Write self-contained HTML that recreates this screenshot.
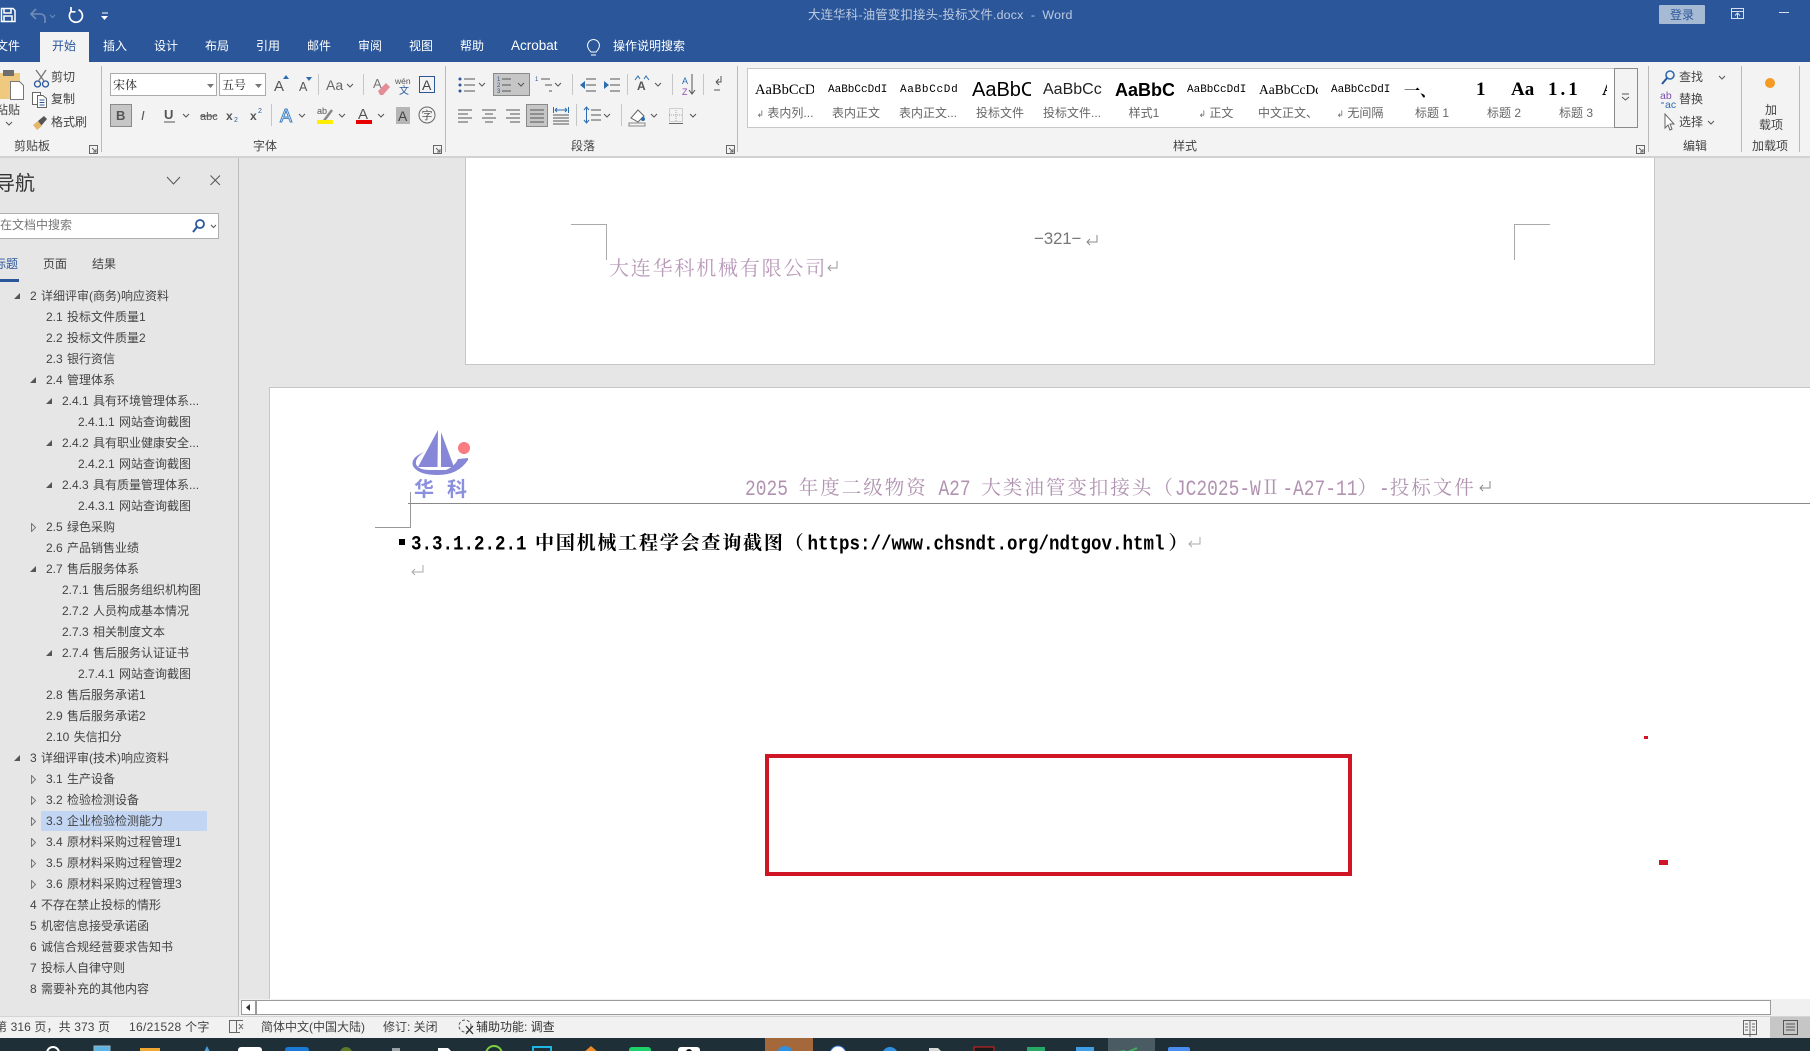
<!DOCTYPE html>
<html lang="zh-CN">
<head>
<meta charset="utf-8">
<title>大连华科-油管变扣接头-投标文件.docx - Word</title>
<style>
*{margin:0;padding:0;box-sizing:border-box}
html,body{width:1810px;height:1051px;overflow:hidden;background:#e6e6e6}
body{position:relative;font-family:"Liberation Sans","Noto Sans CJK SC",sans-serif;font-size:12px;color:#444}
.b{position:absolute}
.t{position:absolute;white-space:nowrap;line-height:16px;font-size:12px}
.w{color:#fff}
.g{color:#444;font-size:12px}
.lab{color:#444;font-size:12px}
.s{position:absolute;top:79px;width:59px;height:22px;overflow:hidden;white-space:nowrap;color:#000;line-height:22px}
.l{position:absolute;top:105px;width:72px;text-align:center;color:#666;font-size:12px;line-height:16px;white-space:nowrap}
#nav{position:absolute;left:0;top:286px;width:238px}
.r{position:relative;height:21px;line-height:21px;font-size:12px;color:#444;white-space:nowrap;word-spacing:1px}
.r svg{position:absolute;top:6px;width:8px;height:9px}
.l1{padding-left:30px}.l2{padding-left:46px}.l3{padding-left:62px}.l4{padding-left:78px}
.l1 svg{left:13px}.l2 svg{left:29px}.l3 svg{left:45px}
.z{font-family:"Liberation Serif","Noto Serif CJK SC",serif}
.m{font-family:"Liberation Mono",monospace}
#head{position:absolute;left:745px;top:473px;line-height:26px;white-space:nowrap;color:#b193b1;font-family:"Noto Serif CJK SC",serif;font-size:19.5px;letter-spacing:2px}
#head .m{display:inline-block;white-space:pre;transform:scaleY(1.22);font-size:17.9px;letter-spacing:0;font-family:"Liberation Mono",monospace}
#h1{position:absolute;left:411px;top:529px;line-height:26px;white-space:nowrap;color:#000;font-family:"Noto Serif CJK SC",serif;font-size:19px;letter-spacing:1.8px;font-weight:700}
#h1 .m{display:inline-block;white-space:pre;transform:scaleY(1.18);font-size:17.5px;letter-spacing:0;font-family:"Liberation Mono",monospace;font-weight:700}
svg text{font-family:"Liberation Sans","Noto Sans CJK SC",sans-serif}
</style>
</head>
<body>
<!-- title bar and ribbon backgrounds -->
<div class="b" style="left:0;top:0;width:1810px;height:62px;background:#2b579a"></div>
<div class="b" style="left:40px;top:32px;width:49px;height:30px;background:#f3f3f3"></div>
<div class="b" style="left:0;top:62px;width:1810px;height:94px;background:#f3f3f3"></div>
<div class="b" style="left:0;top:156px;width:1810px;height:2px;background:#d2d2d2"></div>

<!-- pages -->
<div class="b" style="left:465px;top:158px;width:1190px;height:207px;background:#fff;border:1px solid #c6c6c6;border-top:0"></div>
<div class="b" style="left:269px;top:387px;width:1541px;height:613px;background:#fff;border-left:1px solid #c6c6c6;border-top:1px solid #c6c6c6"></div>
<div class="b" style="left:238px;top:158px;width:1px;height:858px;background:#bcbcbc"></div>

<!-- scroll / status / taskbar -->
<div class="b" style="left:239px;top:999px;width:1571px;height:17px;background:#f0f0f0"></div>
<div class="b" style="left:256px;top:1000px;width:1515px;height:15px;background:#fff;border:1px solid #9a9a9a"></div>
<div class="b" style="left:241px;top:1000px;width:15px;height:15px;background:#fff;border:1px solid #9a9a9a"></div>
<div class="b" style="left:0;top:1016px;width:1810px;height:22px;background:#f1f1f1;border-top:1px solid #d4d4d4"></div>
<div class="b" style="left:1770px;top:1017px;width:40px;height:21px;background:#c6c6c6"></div>
<div class="b" style="left:0;top:1038px;width:1810px;height:13px;background:#1f2f38"></div>
<div class="b" style="left:765px;top:1038px;width:48px;height:13px;background:#a5683a"></div>
<div class="b" style="left:1108px;top:1038px;width:47px;height:13px;background:#4b5b63"></div>

<!-- title bar text -->
<div class="t" style="left:808px;top:7px;color:#bccae0;font-size:12.4px;letter-spacing:.2px">大连华科-油管变扣接头-投标文件.docx&nbsp; -&nbsp; Word</div>
<div class="b" style="left:1659px;top:5px;width:46px;height:19px;background:#a7bad3;border-radius:1px"></div>
<div class="t" style="left:1670px;top:7px;color:#2b579a">登录</div>

<!-- tabs -->
<div class="t w" style="left:-4px;top:38px">文件</div>
<div class="t" style="left:52px;top:38px;color:#2b579a">开始</div>
<div class="t w" style="left:103px;top:38px">插入</div>
<div class="t w" style="left:154px;top:38px">设计</div>
<div class="t w" style="left:205px;top:38px">布局</div>
<div class="t w" style="left:256px;top:38px">引用</div>
<div class="t w" style="left:307px;top:38px">邮件</div>
<div class="t w" style="left:358px;top:38px">审阅</div>
<div class="t w" style="left:409px;top:38px">视图</div>
<div class="t w" style="left:460px;top:38px">帮助</div>
<div class="t w" style="left:511px;top:38px;font-size:13.5px">Acrobat</div>
<div class="t w" style="left:613px;top:38px">操作说明搜索</div>

<!-- clipboard -->
<div class="t lab" style="left:-4px;top:102px">粘贴</div>
<div class="t lab" style="left:51px;top:69px">剪切</div>
<div class="t lab" style="left:51px;top:91px">复制</div>
<div class="t lab" style="left:51px;top:114px">格式刷</div>
<div class="t lab" style="left:14px;top:138px">剪贴板</div>

<!-- font -->
<div class="b" style="left:110px;top:73px;width:107px;height:23px;background:#fff;border:1px solid #ababab"></div>
<div class="b" style="left:219px;top:73px;width:47px;height:23px;background:#fff;border:1px solid #ababab"></div>
<div class="t" style="left:113px;top:77px;color:#222;font-family:'Noto Serif CJK SC',serif">宋体</div>
<div class="t" style="left:222px;top:77px;color:#222;font-family:'Noto Serif CJK SC',serif">五号</div>
<div class="b" style="left:110px;top:104px;width:22px;height:23px;background:#c6c6c6;border:1px solid #8a8a8a"></div>
<div class="b" style="left:493px;top:73px;width:37px;height:23px;background:#c6c6c6;border:1px solid #8a8a8a"></div>
<div class="b" style="left:526px;top:104px;width:22px;height:23px;background:#c6c6c6;border:1px solid #8a8a8a"></div>
<div class="t lab" style="left:253px;top:138px">字体</div>
<div class="t lab" style="left:571px;top:138px">段落</div>

<!-- styles gallery -->
<div class="b" style="left:747px;top:68px;width:868px;height:60px;background:#fff;border:1px solid #c8c8c8"></div>
<div class="b" style="left:1614px;top:68px;width:24px;height:60px;background:#f3f3f3;border:1px solid #8a8a8a"></div>
<div class="s z" style="left:755px;font-size:14.5px">AaBbCcD</div>
<div class="s m" style="left:828px;font-size:11px">AaBbCcDdI</div>
<div class="s m" style="left:900px;font-size:11px;letter-spacing:.7px">AaBbCcDd</div>
<div class="s" style="left:972px;font-size:20px">AaBbC</div>
<div class="s" style="left:1043px;font-size:16px;color:#222">AaBbCc</div>
<div class="s" style="left:1115px;font-size:18px;font-weight:700">AaBbCcc</div>
<div class="s m" style="left:1187px;font-size:11px">AaBbCcDdI</div>
<div class="s z" style="left:1259px;font-size:13.5px">AaBbCcDd</div>
<div class="s m" style="left:1331px;font-size:11px">AaBbCcDdI</div>
<div class="s" style="left:1404px;width:40px;font-size:16px;font-family:'Noto Serif CJK SC',serif;font-weight:700">一、</div>
<div class="s z" style="left:1476px;width:14px;font-size:19px;font-weight:700">1</div>
<div class="s z" style="left:1511px;width:28px;font-size:19px;font-weight:700">Aa</div>
<div class="s z" style="left:1548px;width:36px;font-size:19px;font-weight:700;letter-spacing:3px">1.1</div>
<div class="s z" style="left:1602px;width:5px;font-size:19px;font-weight:700">A</div>
<div class="l" style="left:749px"><span style="font-size:9px;font-family:'DejaVu Sans'">↲</span> 表内列...</div>
<div class="l" style="left:820px">表内正文</div>
<div class="l" style="left:892px">表内正文...</div>
<div class="l" style="left:964px">投标文件</div>
<div class="l" style="left:1036px">投标文件...</div>
<div class="l" style="left:1108px">样式1</div>
<div class="l" style="left:1180px"><span style="font-size:9px;font-family:'DejaVu Sans'">↲</span> 正文</div>
<div class="l" style="left:1252px">中文正文、</div>
<div class="l" style="left:1324px"><span style="font-size:9px;font-family:'DejaVu Sans'">↲</span> 无间隔</div>
<div class="l" style="left:1396px">标题 1</div>
<div class="l" style="left:1468px">标题 2</div>
<div class="l" style="left:1540px">标题 3</div>
<div class="t lab" style="left:1173px;top:138px">样式</div>

<!-- editing -->
<div class="t lab" style="left:1679px;top:69px">查找</div>
<div class="t lab" style="left:1679px;top:91px">替换</div>
<div class="t lab" style="left:1679px;top:114px">选择</div>
<div class="t lab" style="left:1683px;top:138px">编辑</div>
<div class="t lab" style="left:1765px;top:102px">加</div>
<div class="t lab" style="left:1759px;top:117px">载项</div>
<div class="t lab" style="left:1752px;top:138px">加载项</div>

<!-- nav header -->
<div class="t" style="left:-5px;top:172px;font-size:20px;line-height:24px;color:#333">导航</div>
<div class="b" style="left:-2px;top:213px;width:221px;height:26px;background:#fff;border:1px solid #b0b0b0"></div>
<div class="t" style="left:0;top:217px;color:#777">在文档中搜索</div>
<div class="t" style="left:-6px;top:256px;color:#2b579a">标题</div>
<div class="b" style="left:0;top:279px;width:19px;height:3px;background:#2b579a"></div>
<div class="t" style="left:43px;top:256px;color:#444">页面</div>
<div class="t" style="left:92px;top:256px;color:#444">结果</div>

<!-- selection -->
<div class="b" style="left:41px;top:811px;width:166px;height:20px;background:#c2d5f2"></div>

<!-- nav tree -->
<div id="nav">
<div class="r l1"><svg viewBox="0 0 8 9"><polygon points="1,7 7,7 7,1" fill="#555"/></svg>2 详细评审(商务)响应资料</div>
<div class="r l2">2.1 投标文件质量1</div>
<div class="r l2">2.2 投标文件质量2</div>
<div class="r l2">2.3 银行资信</div>
<div class="r l2"><svg viewBox="0 0 8 9"><polygon points="1,7 7,7 7,1" fill="#555"/></svg>2.4 管理体系</div>
<div class="r l3"><svg viewBox="0 0 8 9"><polygon points="1,7 7,7 7,1" fill="#555"/></svg>2.4.1 具有环境管理体系...</div>
<div class="r l4">2.4.1.1 网站查询截图</div>
<div class="r l3"><svg viewBox="0 0 8 9"><polygon points="1,7 7,7 7,1" fill="#555"/></svg>2.4.2 具有职业健康安全...</div>
<div class="r l4">2.4.2.1 网站查询截图</div>
<div class="r l3"><svg viewBox="0 0 8 9"><polygon points="1,7 7,7 7,1" fill="#555"/></svg>2.4.3 具有质量管理体系...</div>
<div class="r l4">2.4.3.1 网站查询截图</div>
<div class="r l2"><svg viewBox="0 0 8 9"><polygon points="2.5,.5 6.5,4.5 2.5,8.5" fill="none" stroke="#777"/></svg>2.5 绿色采购</div>
<div class="r l2">2.6 产品销售业绩</div>
<div class="r l2"><svg viewBox="0 0 8 9"><polygon points="1,7 7,7 7,1" fill="#555"/></svg>2.7 售后服务体系</div>
<div class="r l3">2.7.1 售后服务组织机构图</div>
<div class="r l3">2.7.2 人员构成基本情况</div>
<div class="r l3">2.7.3 相关制度文本</div>
<div class="r l3"><svg viewBox="0 0 8 9"><polygon points="1,7 7,7 7,1" fill="#555"/></svg>2.7.4 售后服务认证证书</div>
<div class="r l4">2.7.4.1 网站查询截图</div>
<div class="r l2">2.8 售后服务承诺1</div>
<div class="r l2">2.9 售后服务承诺2</div>
<div class="r l2">2.10 失信扣分</div>
<div class="r l1"><svg viewBox="0 0 8 9"><polygon points="1,7 7,7 7,1" fill="#555"/></svg>3 详细评审(技术)响应资料</div>
<div class="r l2"><svg viewBox="0 0 8 9"><polygon points="2.5,.5 6.5,4.5 2.5,8.5" fill="none" stroke="#777"/></svg>3.1 生产设备</div>
<div class="r l2"><svg viewBox="0 0 8 9"><polygon points="2.5,.5 6.5,4.5 2.5,8.5" fill="none" stroke="#777"/></svg>3.2 检验检测设备</div>
<div class="r l2"><svg viewBox="0 0 8 9"><polygon points="2.5,.5 6.5,4.5 2.5,8.5" fill="none" stroke="#777"/></svg>3.3 企业检验检测能力</div>
<div class="r l2"><svg viewBox="0 0 8 9"><polygon points="2.5,.5 6.5,4.5 2.5,8.5" fill="none" stroke="#777"/></svg>3.4 原材料采购过程管理1</div>
<div class="r l2"><svg viewBox="0 0 8 9"><polygon points="2.5,.5 6.5,4.5 2.5,8.5" fill="none" stroke="#777"/></svg>3.5 原材料采购过程管理2</div>
<div class="r l2"><svg viewBox="0 0 8 9"><polygon points="2.5,.5 6.5,4.5 2.5,8.5" fill="none" stroke="#777"/></svg>3.6 原材料采购过程管理3</div>
<div class="r l1">4 不存在禁止投标的情形</div>
<div class="r l1">5 机密信息接受承诺函</div>
<div class="r l1">6 诚信合规经营要求告知书</div>
<div class="r l1">7 投标人自律守则</div>
<div class="r l1">8 需要补充的其他内容</div>
</div>

<!-- status bar -->
<div class="t" style="left:-5px;top:1019px;letter-spacing:.12px">第 316 页，共 373 页</div>
<div class="t" style="left:129px;top:1019px;letter-spacing:.3px">16/21528 个字</div>
<div class="t" style="left:261px;top:1019px">简体中文(中国大陆)</div>
<div class="t" style="left:383px;top:1019px">修订: 关闭</div>
<div class="t" style="left:476px;top:1019px;color:#333">辅助功能: 调查</div>

<!-- document text -->
<div class="t" style="left:609px;top:254px;line-height:26px;font-size:20px;letter-spacing:1.8px;color:#b99ab9;font-family:'Noto Serif CJK SC',serif">大连华科机械有限公司</div>
<div class="t" style="left:1034px;top:228px;line-height:22px;font-size:17px;color:#777;font-family:'Liberation Sans',sans-serif;letter-spacing:-.2px">−321−</div>
<div id="head"><span class="m">2025 </span>年度二级物资<span class="m"> A27 </span>大类油管变扣接头（<span class="m">JC2025-W</span>Ⅱ<span class="m">-A27-11</span>）<span class="m">-</span>投标文件</div>
<div id="h1"><span class="m">3.3.1.2.2.1 </span><span style="margin-left:-2px;margin-right:2px">中国机械工程学会查询截图（</span><span class="m">https://www.chsndt.org/ndtgov.html</span><span style="margin-left:4px">）</span></div>
<div class="t" style="left:414px;top:477px;font-size:20px;line-height:26px;color:#8a90de;font-weight:700;letter-spacing:13px">华科</div>

<!-- red shapes -->
<div class="b" style="left:765px;top:754px;width:587px;height:122px;border:4px solid #d01525"></div>
<div class="b" style="left:1644px;top:736px;width:4px;height:3px;background:#d01525"></div>
<div class="b" style="left:1659px;top:860px;width:9px;height:5px;background:#d01525"></div>
<div class="b" style="left:399px;top:539px;width:6px;height:6px;background:#000"></div>

<!-- icons overlay -->
<svg class="b" style="left:0;top:0" width="1810" height="1051" viewBox="0 0 1810 1051" fill="none">
<!-- quick access -->
<path d="M1.5 8.5H13L15 10.5V21.5H1.5Z M4 9V13H11V9 M4 21V16H12V21" stroke="#fff" stroke-width="1.5"/>
<path d="M36 9L31 14L36 19 M31 14H40Q45 14 45 19V23" stroke="#6f8cb8" stroke-width="1.6"/>
<path d="M50 15l2.5 2.5 2.5-2.5" stroke="#6f8cb8"/>
<path d="M78.500 9.800A6.500 6.500 0 1 1 71 11.500M71 7V11.800H75.500" stroke="#fff" stroke-width="1.700"/>
<path d="M102 13H108" stroke="#fff"/><polygon points="101,16 108,16 104.500,20" fill="#fff"/>
<!-- bulb -->
<path d="M591 52Q585 46 589.500 41Q593.500 38 597.500 41Q602 46 596 52Z M591 55H596" stroke="#fff"/>
<!-- window -->
<path d="M1731.500 8.500H1743.500V18.500H1731.500ZM1731.500 11.500H1743.500M1737.500 18V13.500M1735 15.500L1737.500 13L1740 15.500" stroke="#d6dfec"/>
<path d="M1779 12.500H1789" stroke="#d6dfec"/>
<!-- ribbon seps -->
<path d="M101.500 66V152M445.500 66V152M737.500 66V152M1648.500 66V152M1741.500 66V152M1799.500 66V152" stroke="#b9b9b9"/>
<path d="M318.500 74V95M363.500 74V95M271.500 104V126M572.500 74V95M627.500 74V95M672.500 74V95M703.500 74V95M576.500 104V126M621.500 104V126" stroke="#c6c6c6"/>
<!-- launchers -->
<path d="M89.500 145.500H97.500V153.500H89.500ZM92 148L96 152M96 149V152H93" stroke="#666" />
<path d="M433.500 145.500H441.500V153.500H433.500ZM436 148L440 152M440 149V152H437" stroke="#666"/>
<path d="M726.500 145.500H734.500V153.500H726.500ZM729 148L733 152M733 149V152H730" stroke="#666"/>
<path d="M1636.500 145.500H1644.500V153.500H1636.500ZM1639 148L1643 152M1643 149V152H1640" stroke="#666"/>
<!-- paste -->
<rect x="0" y="73" width="20" height="26" fill="#efc980"/>
<rect x="3" y="70" width="11" height="6" fill="#6e6e6e"/>
<path d="M10.500 81.500H19.500L23.500 85.500V99.500H10.500Z" fill="#fff" stroke="#777"/>
<path d="M6 122l3 3 3-3" stroke="#555"/>
<!-- scissors -->
<circle cx="37.500" cy="84" r="3" stroke="#2b579a" stroke-width="1.300"/><circle cx="45.500" cy="84" r="3" stroke="#2b579a" stroke-width="1.300"/>
<path d="M36 70L44 81M46 70L38.500 81" stroke="#777" stroke-width="1.300"/>
<!-- copy -->
<path d="M32.500 92.500H40.500V104.500H32.500Z" fill="#fff" stroke="#666"/><path d="M37.500 95.500H43L46.500 98.500V107.500H37.500Z" fill="#fff" stroke="#666"/>
<path d="M39.500 100H44.500M39.500 102.500H44.500M39.500 105H44.500" stroke="#2b579a"/>
<!-- painter -->
<path d="M38 121L44 116L47 119L41 126Z" fill="#555"/><path d="M33 125L38 121L42 126L37 130Z" fill="#e3b76b"/>
<!-- font controls -->
<polygon points="207,84 214,84 210.500,88" fill="#777"/><polygon points="255,84 262,84 258.500,88" fill="#777"/>
<text x="274" y="91" font-size="15" fill="#555">A</text><polygon points="283,79 289,79 286,75" fill="#2b6cb0"/>
<text x="299" y="91" font-size="12.500" fill="#555">A</text><polygon points="306,77 312,77 309,81" fill="#2b6cb0"/>
<text x="326" y="90" font-size="14" fill="#666">Aa</text><path d="M347 84l3 3 3-3" stroke="#555"/>
<text x="373" y="88" font-size="13" fill="#777">A</text><path d="M378 91L386 83L390 87L383 95H380Z" fill="#e58d96"/>
<text x="395" y="84" font-size="8.500" fill="#555">wén</text><text x="399" y="94" font-size="10" fill="#2b579a">文</text>
<rect x="419.500" y="76.500" width="15" height="16" stroke="#2b579a"/><text x="422" y="90" font-size="14" fill="#444">A</text>
<text x="116" y="120" font-size="13" font-weight="700" fill="#555">B</text>
<text x="141" y="120" font-size="13" font-style="italic" fill="#555" font-family="Liberation Serif">I</text>
<text x="164" y="119" font-size="13" fill="#555" font-weight="700">U</text><path d="M164 122H175" stroke="#555"/><path d="M183 114l3 3 3-3" stroke="#555"/>
<text x="200" y="120" font-size="11" fill="#555">abc</text><path d="M200 116H217" stroke="#555"/>
<text x="226" y="120" font-size="12" font-weight="700" fill="#555">x</text><text x="234" y="122" font-size="7" fill="#2b579a">2</text>
<text x="250" y="120" font-size="12" font-weight="700" fill="#555">x</text><text x="258" y="113" font-size="7" fill="#2b579a">2</text>
<text x="280" y="122" font-size="18" fill="#fff" stroke="#3d7fc4">A</text><path d="M299 114l3 3 3-3" stroke="#555"/>
<text x="317" y="114" font-size="9" fill="#555">ab</text><path d="M323 122L332 110" stroke="#888" stroke-width="2.500"/><rect x="317" y="120" width="16" height="4" fill="#ffee00"/><path d="M339 114l3 3 3-3" stroke="#555"/>
<text x="358" y="119" font-size="15" fill="#555">A</text><rect x="356" y="120" width="16" height="4" fill="#e60000"/><path d="M378 114l3 3 3-3" stroke="#555"/>
<rect x="396" y="107" width="14" height="17" fill="#b5b5b5"/><text x="398" y="121" font-size="14" fill="#444">A</text>
<circle cx="427" cy="115" r="8" stroke="#666"/><text x="421.500" y="119" font-size="11" fill="#555">字</text>
<!-- bullets -->
<path d="M464 79H475M464 85H475M464 91H475" stroke="#555"/><circle cx="460" cy="79" r="1.500" fill="#2b579a"/><circle cx="460" cy="85" r="1.500" fill="#2b579a"/><circle cx="460" cy="91" r="1.500" fill="#2b579a"/><path d="M479 83l3 3 3-3" stroke="#555"/>
<path d="M502 79H511M502 85H511M502 91H511" stroke="#555"/><text x="497" y="81" font-size="6" fill="#2b579a">1</text><text x="497" y="87" font-size="6" fill="#2b579a">2</text><text x="497" y="93" font-size="6" fill="#2b579a">3</text><path d="M518 83l3 3 3-3" stroke="#555"/>
<path d="M541 79H550M545 85H552M549 91H552" stroke="#555"/><text x="535" y="81" font-size="6" fill="#2b579a">1</text><path d="M555 83l3 3 3-3" stroke="#555"/>
<path d="M586 79H596M586 85H596M586 91H596" stroke="#555"/><polygon points="580,85 585,81 585,89" fill="#2b6cb0"/>
<path d="M610 79H620M610 85H620M610 91H620" stroke="#555"/><polygon points="609,85 604,81 604,89" fill="#2b6cb0"/>
<text x="637" y="90" font-size="12" font-weight="700" fill="#555">A</text><path d="M635 80L638 76L640 79M649 80L646 76L644 79" stroke="#2b6cb0"/><path d="M655 83l3 3 3-3" stroke="#555"/>
<text x="682" y="84" font-size="9" fill="#2b6cb0">A</text><text x="682" y="95" font-size="9" fill="#8a4fb0">Z</text><path d="M692 74V93M689 90L692 94L695 90" stroke="#555"/>
<path d="M721 76V82H716M716 82L719 79M716 82L719 85M714 90H720" stroke="#555"/>
<!-- align -->
<path d="M458 110H472M458 114H468M458 118H472M458 122H468" stroke="#555"/>
<path d="M482 110H496M485 114H493M482 118H496M485 122H493" stroke="#555"/>
<path d="M506 110H520M510 114H520M506 118H520M510 122H520" stroke="#555"/>
<path d="M530 110H544M530 114H544M530 118H544M530 122H544" stroke="#555"/>
<path d="M553.500 107V113M568.500 107V113M555 110H567M555 110l2-2M555 110l2 2M567 110l-2-2M567 110l-2 2" stroke="#2b6cb0"/><path d="M553 115H569M553 118H569M553 121H569M553 124H569" stroke="#555"/>
<path d="M591 110H601M591 115H601M591 120H601" stroke="#555"/><path d="M586.500 107V123M584 110L586.500 107L589 110M584 120L586.500 123L589 120" stroke="#2b6cb0"/><path d="M604 114l3 3 3-3" stroke="#555"/>
<path d="M631 118L638 110L644 116L638 122Z" stroke="#666" fill="#fff"/><circle cx="643" cy="119" r="2" fill="#2b6cb0"/><rect x="629" y="123" width="16" height="3" stroke="#888"/><path d="M651 114l3 3 3-3" stroke="#555"/>
<path d="M669.500 108.500H682.500V121.500H669.500ZM676 108V122M669 115H683" stroke="#aaa" stroke-dasharray="1 1"/><path d="M669 123.500H683" stroke="#666"/><path d="M690 114l3 3 3-3" stroke="#555"/>
<!-- gallery more -->
<path d="M1622 94H1629" stroke="#555"/><path d="M1622 97l3.500 3 3.500-3" stroke="#555"/>
<!-- editing icons -->
<circle cx="1670" cy="75" r="4" stroke="#2b6cb0" stroke-width="1.600"/><path d="M1667 78L1662 84" stroke="#2b579a" stroke-width="2"/><path d="M1719 76l3 3 3-3" stroke="#555"/>
<text x="1660" y="99" font-size="10.500" fill="#7b4fb0">ab</text><text x="1665" y="108" font-size="10.500" fill="#2b6cb0">ac</text><path d="M1661 103H1664" stroke="#2b6cb0"/>
<path d="M1665 114V128L1668 125L1670 130L1672 129L1670 124H1674Z" stroke="#666" fill="#fff"/><path d="M1708 121l3 3 3-3" stroke="#555"/>
<circle cx="1770" cy="83" r="5" fill="#f59a23"/>
<!-- nav header -->
<path d="M167 177L173.500 184L180 177" stroke="#555"/>
<path d="M210.500 175.500L220 185M220 175.500L210.500 185" stroke="#555"/>
<circle cx="200" cy="224" r="4" stroke="#2b579a" stroke-width="1.800"/><path d="M197 227L193 232" stroke="#2b579a" stroke-width="2"/><path d="M211 225l2.500 2.500 2.500-2.500" stroke="#555"/>
<!-- scroll arrow -->
<polygon points="250,1004 246,1007.500 250,1011" fill="#333"/>
<!-- crop marks -->
<path d="M571 224.500H606.500V260M1550 224.500H1514.500V260" stroke="#aaa"/>
<path d="M375 527.500H410.500V492" stroke="#999"/>
<path d="M408 503.500H1810" stroke="#888"/>
<!-- return marks -->
<path d="M1097 235V242H1087M1090 239L1087 242L1090 245" stroke="#888"/>
<path d="M837 261V268H828M831 265L828 268L831 271" stroke="#999"/>
<path d="M1490 481V488H1480M1483 485L1480 488L1483 491" stroke="#888"/>
<path d="M1200 537V544H1189M1192 541L1189 544L1192 547" stroke="#aaa"/>
<path d="M423 565V572H412M415 569L412 572L415 575" stroke="#aaa"/>
<!-- logo -->
<polygon points="438,430 437.500,467 418,467" fill="#8787d8"/>
<polygon points="441,432 441,467 454,467" fill="#8787d8"/>
<path d="M424 452Q410 458 413 466Q418 475 438 475Q458 475 468 460V458L458 459Q455 466 446 470H430Q418 470 416 464Q415 458 424 452Z" fill="#8787d8"/>
<circle cx="464" cy="448" r="6" fill="#f87c80"/>
<!-- status icons -->
<path d="M229.500 1020.500H236.500V1032.500H229.500ZM237 1020.500H243M237 1032.500H240M239 1024L243 1029M243 1024L239 1029" stroke="#666"/>
<circle cx="465" cy="1026" r="6" stroke="#555" stroke-dasharray="3 2"/><path d="M466 1026L473 1034M473 1026L466 1034" stroke="#333" stroke-width="1.300"/>
<path d="M1743.500 1020.500H1756.500V1034.500H1743.500ZM1750 1020V1037M1745 1024H1748M1745 1027H1748M1745 1030H1748M1752 1024H1755M1752 1027H1755M1752 1030H1755" stroke="#666"/>
<path d="M1783.500 1020.500H1797.500V1034.500H1783.500ZM1786 1024H1795M1786 1027H1795M1786 1030H1795" stroke="#555"/>
<!-- taskbar icons -->
<circle cx="53" cy="1053" r="6" stroke="#fff" stroke-width="2"/>
<rect x="94" y="1046" width="16" height="8" fill="#5bb4e6" stroke="#9fb3bd"/>
<rect x="140" y="1048" width="20" height="6" fill="#f0a830"/>
<path d="M207 1046L210 1052H204Z" fill="#4fa0d8"/>
<rect x="238" y="1047" width="24" height="6" rx="3" fill="#fff"/>
<rect x="285" y="1047" width="24" height="6" rx="3" fill="#1a7ad6"/>
<circle cx="346" cy="1053" r="6" fill="#5c7a2a"/>
<path d="M392 1048H400V1053H392Z" fill="#9aa3a8"/>
<path d="M438 1048H448L452 1052H438Z" fill="#fff"/>
<circle cx="494" cy="1054" r="8" stroke="#7ccf3f" stroke-width="2"/>
<rect x="533" y="1047" width="18" height="7" stroke="#1fb6e6" stroke-width="2"/>
<path d="M591 1046L599 1053H583Z" fill="#f08a24"/>
<rect x="629" y="1047" width="22" height="6" rx="3" fill="#1fd16a"/>
<rect x="678" y="1047" width="22" height="6" rx="3" fill="#fff"/><circle cx="689" cy="1052" r="3" fill="#111"/>
<circle cx="785" cy="1054" r="8" fill="#2f8fe0"/>
<circle cx="838" cy="1054" r="8" fill="#fff" stroke="#2f6fd0"/>
<circle cx="890" cy="1055" r="8" fill="#2f8fe0"/>
<path d="M929 1048H938L942 1052H929Z" fill="#d8d8d8"/>
<rect x="974" y="1047" width="20" height="7" fill="#1a1a1a" stroke="#e02020"/>
<rect x="1027" y="1047" width="18" height="7" fill="#27a865"/>
<rect x="1076" y="1047" width="18" height="7" fill="#3f9fe6"/>
<path d="M1118 1052L1125 1051M1128 1052L1137 1048" stroke="#3fae5a" stroke-width="2"/>
<rect x="1168" y="1047" width="22" height="7" rx="2" fill="#4a8df0"/>
</svg>
</body>
</html>
